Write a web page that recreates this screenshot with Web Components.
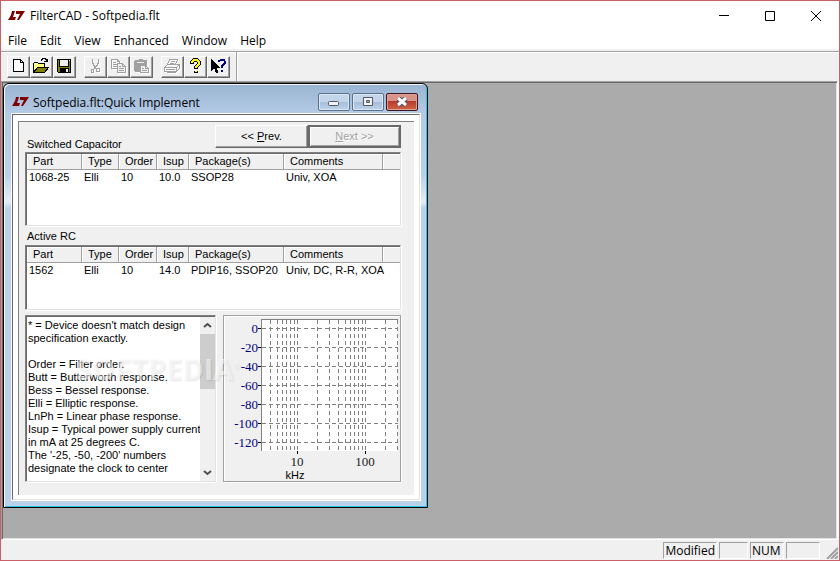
<!DOCTYPE html>
<html lang="en">
<head>
<meta charset="utf-8">
<title>FilterCAD - Softpedia.flt</title>
<style>
    html, body { height: 100%; margin: 0; }
    body { font: 12px/16px "Open Sans", "Noto Sans", sans-serif; color: #000; background: #fff; }
</style>
</head>
<body>
<app-window caption="FilterCAD - Softpedia.flt">
    <menu-bar slot="menu" items="File,Edit,View,Enhanced,Window,Help"></menu-bar>
    <tool-bar slot="tools">
        <tool-group>
            <tool-button icon="new" label="New"></tool-button>
            <tool-button icon="open" label="Open"></tool-button>
            <tool-button icon="save" label="Save"></tool-button>
        </tool-group>
        <tool-group>
            <tool-button icon="cut" label="Cut" disabled></tool-button>
            <tool-button icon="copy" label="Copy" disabled></tool-button>
            <tool-button icon="paste" label="Paste" disabled></tool-button>
        </tool-group>
        <tool-group>
            <tool-button icon="print" label="Print" disabled></tool-button>
            <tool-button icon="about" label="About"></tool-button>
            <tool-button icon="help" label="Context help"></tool-button>
        </tool-group>
    </tool-bar>
    <mdi-child caption="Softpedia.flt:Quick Implement">
        <quick-implement></quick-implement>
    </mdi-child>
    <status-bar slot="status"></status-bar>
</app-window>

<script>
const LOGO = `<svg class="logo" width="17" height="10" viewBox="0 0 17 10" aria-hidden="true">
    <path fill="#800000" d="M4 0h3L5 6h3l-1 3H0l3-5zM8 0h9l-6 9H9l3-6H8z"/></svg>`;

// toolbar pictures, drawn on a 19x18 grid
const ICONS = {
    new: '<path d="M4.5 1.5h7l3 3v9h-10z" fill="#fff" stroke="#000"/><path d="M11.5 1.5v3h3" fill="none" stroke="#000"/>',
    open: `<path d="M1.5 14.5v-9l1-1h3l1 1h6v3" fill="#ffff80" stroke="#000"/>
        <path d="M1.5 14.5l4-5h11l-4 5z" fill="#808000" stroke="#000"/>
        <path d="M9.5 2.5v-1h1v-1h3v1h1v2M12 3.5h4M15.5 1v3" fill="none" stroke="#000"/>`,
    save: `<path d="M2.5 1.5h13v13h-12l-1-1z" fill="#808000" stroke="#000"/>
        <path d="M5 2h8v6H5z" fill="#f0f0f0"/><path d="M4.5 2v6.5h9V2" fill="none" stroke="#000"/>
        <path d="M5 10h9v5H5z" fill="#000"/><path d="M11 11h2v3h-2z" fill="#f0f0f0"/><path d="M14 2h1v1h-1z" fill="#fff"/>`,
    cut: `<path d="M6.5 1v4l1 1v1l1 1v1M12.5 1v4l-1 1v1l-1 1-1 1v2" fill="none" stroke="#a0a0a0"/>
        <path d="M8.5 9v2M5.5 11.5h2v3h-2zM10.5 10.5h3v3h-3z" fill="none" stroke="#a0a0a0"/>`,
    copy: `<path d="M2.5 1.5h6l2 2v7h-8zM8.5 1.5v2h2M4 4.5h3M4 6.5h4M4 8.5h4" fill="none" stroke="#a0a0a0"/>
        <path d="M8.5 5.5h5l3 3v6h-8z" fill="#f0f0f0" stroke="#a0a0a0"/><path d="M13.5 5.5v3h3M10 8.5h2M10 10.5h5M10 12.5h5" fill="none" stroke="#a0a0a0"/>`,
    paste: `<path d="M2 3l1-1h3l1-1h3l1 1h3l1 1v11H3l-1-1z" fill="#a0a0a0"/><path d="M5 4h7v1H5z" fill="#f0f0f0"/>
        <path d="M8.5 7.5h5l3 3v4h-8z" fill="#f0f0f0" stroke="#a0a0a0"/><path d="M13.5 7.5v3h3M10 10.5h2M10 12.5h5" fill="none" stroke="#a0a0a0"/>`,
    print: `<path d="M6.5 1.5h8l-2 5h-8zM8 3.5h4M7 5.5h4" fill="none" stroke="#a0a0a0"/>
        <path d="M1.5 9.5l3-3h12l-3 3zM1.5 9.5v4h12v-4M13.5 13.5l3-3v-4M3 11.5h9M4.5 13.5v1h8l2-2" fill="none" stroke="#a0a0a0"/>`,
    about: `<path d="M6 6V4l2-2h3l2 2v2l-3 3v2M10 13v2" fill="none" stroke="#000" stroke-width="4"/>
        <path d="M6 5V4l2-2h3l2 2v2l-3 3v1M10 13v1" fill="none" stroke="#ff0" stroke-width="2"/>`,
    help: `<path d="M2 1v12l3-3 2 5h2V13l-1-3h4z" fill="#000"/>
        <path d="M10 4V3l2-1h3l1 2v1l-3 3v2M13 12v2" fill="none" stroke="#000080" stroke-width="2"/>`
};

class AppWindow extends HTMLElement {
    constructor() {
        super();
        const shadow = this.attachShadow({ mode: 'open' });
        shadow.innerHTML = `
            <style>
                :host {
                    display: flex;
                    flex-direction: column;
                    box-sizing: border-box;
                    height: 100vh;
                    border: 1px solid #cb6068;
                    background: #fff;
                }
                header { display: flex; align-items: center; height: 30px; padding-left: 7px; gap: 5px; }
                h1 { flex: 1; margin: 0; font: inherit; }
                .caption { display: flex; }
                .caption button {
                    width: 46px;
                    height: 28px;
                    padding: 0;
                    border: 0;
                    background: none;
                }
                .caption svg { display: block; margin: auto; }
                main {
                    flex: 1;
                    position: relative;
                    min-height: 0;
                    overflow: hidden;
                    margin: 0 1px 0 0;
                    border: 1px solid;
                    border-color: #a0a0a0 #fff #fff #a0a0a0;
                    background: #ababab;
                    box-shadow: inset 1px 1px #696969, inset -1px -1px #e3e3e3;
                }
            </style>
            <header>
                ${LOGO}
                <h1>${this.getAttribute('caption')}</h1>
                <div class="caption">
                    <button aria-label="Minimize"><svg width="10" height="10" viewBox="0 0 10 10"><path d="M0 4.5h10" stroke="#000"/></svg></button>
                    <button aria-label="Maximize"><svg width="10" height="10" viewBox="0 0 10 10"><path d="M.5.5h9v9h-9z" fill="none" stroke="#000"/></svg></button>
                    <button aria-label="Close"><svg width="10" height="10" viewBox="0 0 10 10"><path d="M0 0l10 10M10 0L0 10" stroke="#000"/></svg></button>
                </div>
            </header>
            <slot name="menu"></slot>
            <slot name="tools"></slot>
            <main><slot></slot></main>
            <slot name="status"></slot>
        `;
    }
}

class MenuBar extends HTMLElement {
    constructor() {
        super();
        const shadow = this.attachShadow({ mode: 'open' });
        const items = this.getAttribute('items').split(',');
        shadow.innerHTML = `
            <style>
                :host { display: block; }
                nav { display: flex; gap: 13px; height: 18px; padding: 0 7px; line-height: 20px; }
                a { color: #000; text-decoration: none; }
            </style>
            <nav>${items.map(item => `<a href="#">${item}</a>`).join('')}</nav>
        `;
    }
}

class ToolBar extends HTMLElement {
    constructor() {
        super();
        const shadow = this.attachShadow({ mode: 'open' });
        shadow.innerHTML = `
            <style>
                :host {
                    display: block;
                    border-top: 2px solid #f0f0f0;
                    background: #f0f0f0;
                }
                .rail { display: flex; border-top: 1px solid #a0a0a0; box-shadow: inset 0 1px #fff; }
                .tools {
                    display: flex;
                    gap: 8px;
                    padding: 4px 6px 3px;
                    border-right: 1px solid #a0a0a0;
                    box-shadow: 1px 0 #fff;
                }
            </style>
            <div class="rail"><div class="tools"><slot></slot></div></div>
        `;
    }
}

class ToolGroup extends HTMLElement {
    constructor() {
        super();
        this.attachShadow({ mode: 'open' }).innerHTML = `
            <style>:host { display: flex; }</style>
            <slot></slot>
        `;
    }
}

class ToolButton extends HTMLElement {
    constructor() {
        super();
        const shadow = this.attachShadow({ mode: 'open' });
        const off = this.hasAttribute('disabled');
        shadow.innerHTML = `
            <style>
                :host { display: block; }
                button {
                    display: block;
                    padding: 1px;
                    border: 1px solid;
                    border-color: #fff #696969 #696969 #fff;
                    background: #f0f0f0;
                    box-shadow: inset -1px -1px #a0a0a0;
                }
                svg { display: block; }
                button:disabled svg { filter: drop-shadow(1px 1px 0 #fff); }
            </style>
            <button aria-label="${this.getAttribute('label')}" ${off ? 'disabled' : ''}>
                <svg width="19" height="18" viewBox="0 0 19 18" shape-rendering="crispEdges">${ICONS[this.getAttribute('icon')]}</svg>
            </button>
        `;
    }
}

class MdiChild extends HTMLElement {
    constructor() {
        super();
        const shadow = this.attachShadow({ mode: 'open' });
        shadow.innerHTML = `
            <style>
                :host {
                    position: absolute;
                    left: 1px;
                    top: 1px;
                    box-sizing: border-box;
                    width: 425px;
                    padding: 0 7px 7px 8px;
                    border: 1px solid #000;
                    border-radius: 6px 6px 0 0;
                    background: linear-gradient(#99b4d1, #b4cbe6 30px, #b9d1ea 90px, #e4edf8 118px, #b9d1ea 124px);
                    box-shadow: inset 1px 1px #f4f8fc, inset -1px -1px #29c5e6;
                }
                header { display: flex; align-items: center; height: 30px; gap: 4px; padding-right: 2px; }
                h2 { flex: 1; margin: 0; padding-top: 8px; font: inherit; }
                .logo { margin-top: 6px; }
                .caption { display: flex; gap: 2px; padding-top: 6px; }
                .caption button {
                    width: 32px;
                    height: 18px;
                    padding: 0;
                    border: 1px solid #5d708c;
                    border-radius: 2px;
                    background: linear-gradient(#c3d5e9 50%, #a5bdd9 50%, #bdd3ea);
                    box-shadow: inset 0 0 0 1px #d9e7f5;
                }
                .caption .close {
                    border-color: #431422;
                    background: linear-gradient(#d99488 45%, #b8392b 45%, #cd6645);
                    box-shadow: inset 0 0 0 1px #dda097;
                }
                .caption svg { display: block; margin: auto; }
                section {
                    padding: 6px 5px 4px;
                    border: 1px solid;
                    border-color: #696969 #e3e3e3 #e3e3e3 #696969;
                    outline: 1px solid #fff;
                    background: #fff;
                }
            </style>
            <header>
                ${LOGO}
                <h2>${this.getAttribute('caption')}</h2>
                <div class="caption">
                    <button aria-label="Minimize"><svg width="12" height="10" viewBox="0 0 12 10"><rect x=".5" y="4.5" width="10" height="4" rx="1" fill="#f4f4f4" stroke="#535666"/></svg></button>
                    <button aria-label="Restore"><svg width="12" height="10" viewBox="0 0 12 10"><path d="M1.5.5h9v8h-9z" fill="#f4f4f4" stroke="#535666"/><path d="M4.5 3.5h3v2h-3z" fill="#9fb8d6" stroke="#535666"/></svg></button>
                    <button class="close" aria-label="Close"><svg width="12" height="10" viewBox="0 0 12 10"><path d="M2 1l8 7M10 1L2 8" stroke="#535666" stroke-width="5"/><path d="M2 1l8 7M10 1L2 8" stroke="#fff" stroke-width="3"/></svg></button>
                </div>
            </header>
            <section><slot></slot></section>
        `;
    }
}

class QuickImplement extends HTMLElement {
    constructor() {
        super();
        const shadow = this.attachShadow({ mode: 'open' });
        shadow.innerHTML = `
            <style>
                :host {
                    display: block;
                    padding: 3px 13px 13px 6px;
                    border-top: 1px solid #808080;
                    border-left: 1px solid #808080;
                    background: #f0f0f0;
                    font: 11px/13px "Liberation Sans", Arial, sans-serif;
                }
                .top { display: flex; height: 27px; }
                .top h3 { flex: 1; align-self: flex-end; }
                h3 { margin: 0; padding-left: 2px; font: inherit; line-height: 15px; }
                .top button {
                    width: 93px;
                    height: 23px;
                    padding: 0;
                    border: 1px solid;
                    border-color: #fff #696969 #696969 #fff;
                    background: #f0f0f0;
                    box-shadow: inset -1px -1px #a0a0a0;
                    font: inherit;
                    color: #000;
                }
                .top button:disabled {
                    border: 2px solid #696969;
                    box-shadow: inset 1px 1px #fff, inset -1px -1px #a0a0a0;
                    color: #a0a0a0;
                    text-shadow: 1px 1px #fff;
                }
                .second { padding: 2px 0 1px; }
                .second h3 { line-height: 16px; }
                .bottom { display: flex; gap: 7px; padding-top: 5px; }
            </style>
            <div class="top">
                <h3>Switched Capacitor</h3>
                <button>&lt;&lt; <u>P</u>rev.</button>
                <button disabled><u>N</u>ext &gt;&gt;</button>
            </div>
            <part-list rows="4" label="Switched Capacitor" row="1068-25|Elli|10|10.0|SSOP28|Univ, XOA"></part-list>
            <div class="second"><h3>Active RC</h3></div>
            <part-list rows="3" label="Active RC" row="1562|Elli|10|14.0|PDIP16, SSOP20|Univ, DC, R-R, XOA"></part-list>
            <div class="bottom">
                <legend-box></legend-box>
                <response-plot></response-plot>
            </div>
        `;
    }
}

class PartList extends HTMLElement {
    constructor() {
        super();
        const shadow = this.attachShadow({ mode: 'open' });
        const heads = ['Part', 'Type', 'Order', 'Isup', 'Package(s)', 'Comments', ''];
        const widths = [55, 37, 38, 32, 95, 99, 0];
        const cells = this.getAttribute('row').split('|').concat('');
        const height = this.getAttribute('rows') === '4' ? 72 : 63;
        shadow.innerHTML = `
            <style>
                :host {
                    display: block;
                    height: ${height}px;
                    border: 1px solid;
                    border-color: #808080 #e3e3e3 #e3e3e3 #808080;
                    background: #fff;
                    box-shadow: inset 1px 1px #696969, 1px 1px #fff;
                }
                table { width: 100%; padding: 1px 0 0 1px; border-spacing: 0; table-layout: fixed; }
                th, td { padding: 0; font-weight: normal; text-align: left; white-space: nowrap; }
                th {
                    height: 15px;
                    padding-left: 6px;
                    border-right: 1px solid #a0a0a0;
                    border-bottom: 1px solid #a0a0a0;
                    background: #f0f0f0;
                    box-shadow: inset 1px 1px #fff;
                }
                th:last-child { border-right: 0; }
                td { height: 15px; padding-left: 2px; }
            </style>
            <table aria-label="${this.getAttribute('label')}">
                <colgroup>${widths.map(w => `<col${w ? ` style="width: ${w}px"` : ''}>`).join('')}</colgroup>
                <thead><tr>${heads.map(h => `<th>${h}</th>`).join('')}</tr></thead>
                <tbody><tr>${cells.map(c => `<td>${c}</td>`).join('')}</tr></tbody>
            </table>
        `;
    }
}

class LegendBox extends HTMLElement {
    constructor() {
        super();
        const shadow = this.attachShadow({ mode: 'open' });
        shadow.innerHTML = `
            <style>
                :host {
                    display: flex;
                    position: relative;
                    flex: 1;
                    min-width: 0;
                    border: 1px solid;
                    border-color: #808080 #e3e3e3 #e3e3e3 #808080;
                    background: #fff;
                    box-shadow: inset 1px 1px #696969, 1px 1px #fff;
                }
                textarea {
                    flex: 1;
                    min-width: 0;
                    margin: 1px 0 0 1px;
                    padding: 2px 0 0 1px;
                    border: 0;
                    outline: 0;
                    overflow: hidden;
                    resize: none;
                    white-space: pre;
                    background: none;
                    font: inherit;
                    color: #000;
                }
                .scroll {
                    display: flex;
                    flex-direction: column;
                    width: 15px;
                    margin-top: 1px;
                    background: #f0f0f0;
                }
                .scroll button { height: 17px; padding: 0; border: 0; background: none; }
                .scroll svg { display: block; margin: auto; }
                .track { flex: 1; }
                .thumb { height: 42%; background: #cdcdcd; }
                .mark {
                    position: absolute;
                    left: 50px;
                    top: 36px;
                    font: bold 29px/34px "Open Sans", sans-serif;
                    color: rgba(255, 255, 255, .55);
                    text-shadow: 1px 1px 2px rgba(0, 0, 0, .1);
                    white-space: nowrap;
                    pointer-events: none;
                    z-index: 1;
                }
                .mark sup { font-size: 8px; line-height: 1px; }
            </style>
            <textarea readonly aria-label="Legend">* = Device doesn't match design
specification exactly.

Order = Filter order.
Butt = Butterworth response.
Bess = Bessel response.
Elli = Elliptic response.
LnPh = Linear phase response.
Isup = Typical power supply current
in mA at 25 degrees C.
The '-25, -50, -200' numbers
designate the clock to center</textarea>
            <div class="scroll">
                <button aria-label="Scroll up"><svg width="9" height="7" viewBox="0 0 9 7"><path d="M1 5l3.5-3L8 5" fill="none" stroke="#505050" stroke-width="2"/></svg></button>
                <div class="track"><div class="thumb"></div></div>
                <button aria-label="Scroll down"><svg width="9" height="7" viewBox="0 0 9 7"><path d="M1 2l3.5 3L8 2" fill="none" stroke="#505050" stroke-width="2"/></svg></button>
            </div>
            <div class="mark">SOFTPEDIA<sup>®</sup></div>
        `;
    }
}

class ResponsePlot extends HTMLElement {
    constructor() {
        super();
        const shadow = this.attachShadow({ mode: 'open' });
        // log axis: 68px per decade, 10 kHz at x = 73
        const freqs = [3, 4, 5, 6, 7, 8, 9, 10, 20, 30, 40, 50, 60, 70, 80, 90, 100, 200];
        const cols = freqs.map(f => Math.round(73 + 68 * Math.log10(f / 10)) + 0.5);
        let lines = '';
        let labels = '';
        cols.concat(173.5).forEach(x => { lines += `M${x} 4v131`; });
        let ticks = 'M73.5 135v3M141.5 135v3';
        for (let i = 0; i < 7; i++) {
            const y = 12 + i * 19;
            lines += `M38 ${y}.5h136`;
            ticks += `M34 ${y}.5h3`;
            labels += `<text x="34" y="${y + 5}" text-anchor="end">${i ? '-' + i * 20 : 0}</text>`;
        }
        shadow.innerHTML = `
            <style>
                :host {
                    display: block;
                    flex: none;
                    width: 176px;
                    border: 1px solid #a0a0a0;
                    box-shadow: inset 1px 1px #fff, 1px 1px #fff;
                }
                svg { display: block; width: 100%; height: auto; }
                .axis { font: 13px "Liberation Serif", serif; fill: #000080; }
                .axis.x { fill: #222; text-anchor: middle; }
            </style>
            <svg viewBox="0 0 176 165" role="img" aria-label="Frequency response">
                <path d="M37 3h137v132H37z" fill="#fff"/>
                <g fill="none" shape-rendering="crispEdges">
                    <path d="${lines}" stroke="#808080" stroke-dasharray="4 3"/>
                    <path d="M37.5 135V3.5H174" stroke="#808080"/>
                    <path d="${ticks}" stroke="#000"/>
                </g>
                <g class="axis">${labels}</g>
                <g class="axis x"><text x="73" y="150">10</text><text x="141" y="150">100</text></g>
                <text x="71" y="163" text-anchor="middle">kHz</text>
            </svg>
        `;
    }
}

class StatusBar extends HTMLElement {
    constructor() {
        super();
        const shadow = this.attachShadow({ mode: 'open' });
        shadow.innerHTML = `
            <style>
                :host {
                    display: flex;
                    justify-content: flex-end;
                    gap: 2px;
                    height: 17px;
                    padding: 2px 1px 1px;
                    background: #f0f0f0;
                }
                span {
                    box-sizing: border-box;
                    min-width: 29px;
                    padding: 0 1px;
                    border: 1px solid;
                    border-color: #a0a0a0 #fff #fff #a0a0a0;
                    line-height: 16px;
                }
                .wide { min-width: 34px; }
                svg { align-self: flex-end; margin-left: 4px; }
            </style>
            <span>Modified</span><span></span><span class="wide">NUM</span><span class="wide"></span>
            <svg width="12" height="12" viewBox="0 0 12 12" aria-hidden="true">
                <path d="M1 12L12 1M5 12l7-7M9 12l3-3" stroke="#a0a0a0" stroke-width="2"/>
            </svg>
        `;
    }
}

customElements.define('part-list', PartList);
customElements.define('legend-box', LegendBox);
customElements.define('response-plot', ResponsePlot);
customElements.define('quick-implement', QuickImplement);
customElements.define('mdi-child', MdiChild);
customElements.define('tool-button', ToolButton);
customElements.define('tool-group', ToolGroup);
customElements.define('tool-bar', ToolBar);
customElements.define('menu-bar', MenuBar);
customElements.define('status-bar', StatusBar);
customElements.define('app-window', AppWindow);
</script>
</body>
</html>
